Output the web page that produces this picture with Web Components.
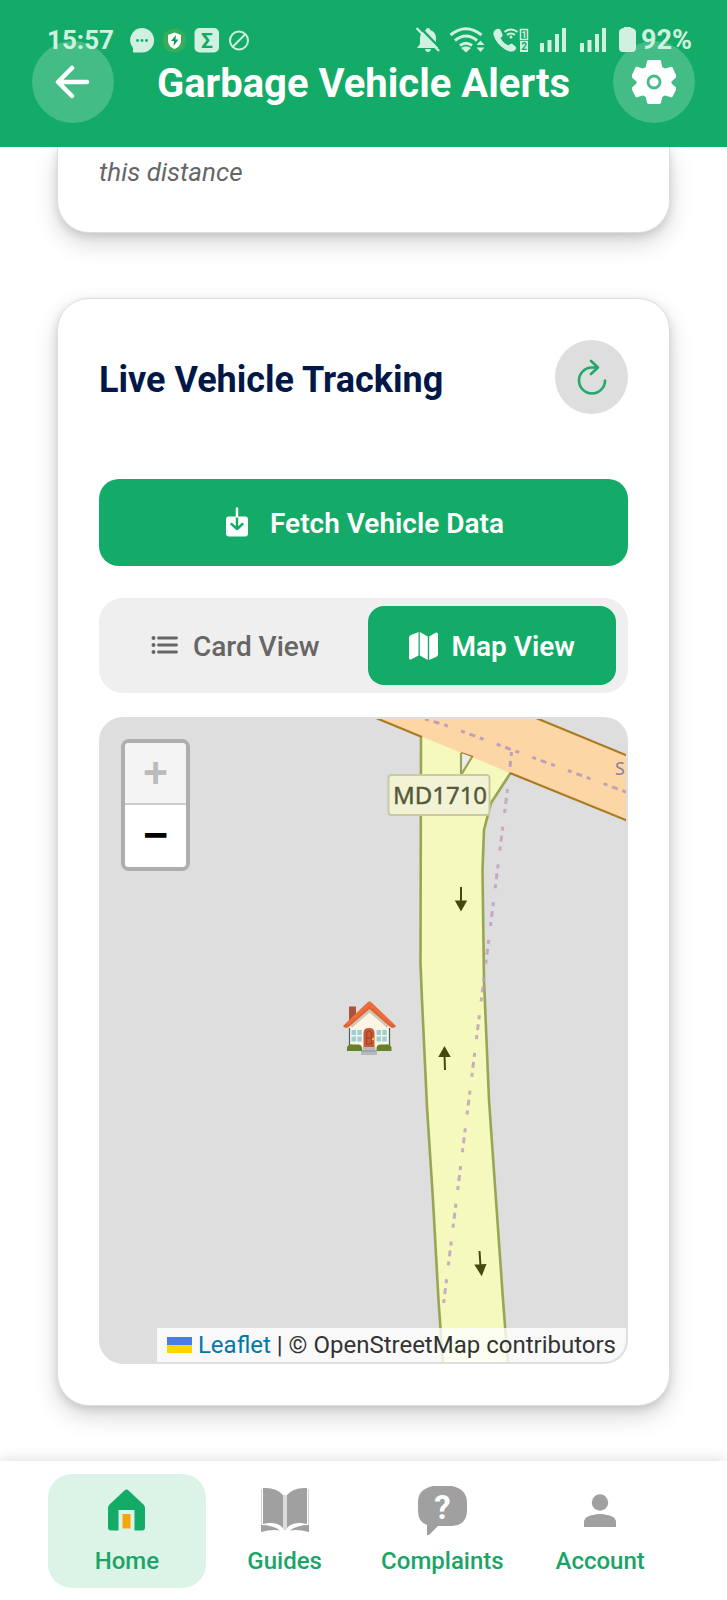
<!DOCTYPE html>
<html lang="en">
<head>
  <meta charset="UTF-8">
  <meta name="viewport" content="width=device-width, initial-scale=1.0">
  <title>Garbage Vehicle Alerts</title>
  <style>
    body {
      margin: 0;
      min-height: 100vh;
      display: flex;
      flex-direction: column;
      background: #fff;
      font-family: Roboto, "Liberation Sans", sans-serif;
      --green: #13ab67;
      --line: #dedede;
    }
    main {
      flex: 1;
      padding: 0 57px 55px;
    }
    .hint {
      margin: 0;
      font-size: 26px;
      line-height: 32px;
      font-style: italic;
      color: #666;
    }
  </style>
</head>
<body>
  <app-header>Garbage Vehicle Alerts</app-header>
  <main>
    <app-card scrolled>
      <p class="hint">this distance</p>
    </app-card>
    <app-card>
      <tracking-head>Live Vehicle Tracking</tracking-head>
      <fetch-button>Fetch Vehicle Data</fetch-button>
      <view-toggle></view-toggle>
      <vehicle-map></vehicle-map>
    </app-card>
  </main>
  <bottom-nav>
    <nav-item active>
      <svg slot="icon" width="49" height="49" viewBox="0 0 49 49">
        <path fill="#13ab67" d="M24.500 3.500q-1 0-2 1L7.500 18.500Q6 20 6 22v19.500q0 3 3 3h7.500V24h16v20.500H40q3 0 3-3V22q0-2-1.500-3.500L26.500 4.500q-1-1-2-1z"/>
        <path fill="#f7a60a" d="M20.500 28h8v14.500h-8z"/>
      </svg>
      Home
    </nav-item>
    <nav-item>
      <svg slot="icon" width="49" height="49" viewBox="0 0 49 49">
        <path fill="#a0a0a0" d="M3 2q13-1 20 7v33Q17 35 3 38zM47 2q-13-1-20 7v33q6-7 20-4z"/>
        <path fill="#dcdcdc" d="M23 9h4v35h-4z"/>
        <path fill="#a0a0a0" d="M1 39q12 0 19 5.500Q12 43 1 46zM49 39q-12 0-19 5.500 8-1.500 19 1.500z"/>
        <path fill="none" stroke="#d0d0d0" stroke-width="1" d="M1.500 3v36M48.500 3v36"/>
      </svg>
      Guides
    </nav-item>
    <nav-item>
      <svg slot="icon" width="49" height="49" viewBox="0 0 49 49">
        <path fill="#a0a0a0" d="M15 0h19q15 3 15 17v7q0 15-15 16H20l-9 9H9V39Q0 36 0 25v-9Q0 3 15 0z"/>
        <text x="24.500" y="33" text-anchor="middle" font-family="Roboto, sans-serif" font-size="33" font-weight="700" fill="#fff">?</text>
      </svg>
      Complaints
    </nav-item>
    <nav-item>
      <svg slot="icon" width="49" height="49" viewBox="0 0 49 49">
        <circle cx="24" cy="16.500" r="8.200" fill="#a0a0a0"/>
        <path fill="#a0a0a0" d="M8 41v-5q0-7 16-8 16 1 16 8v5z"/>
      </svg>
      Account
    </nav-item>
  </bottom-nav>

  <script>
    function define (name, html) {
      const template = document.createElement('template')
      template.innerHTML = html
      customElements.define(name, class extends HTMLElement {
        constructor () {
          super()
          this.attachShadow({ mode: 'open' }).appendChild(template.content.cloneNode(true))
        }
      })
    }

    define('status-bar', `
      <style>
        :host {
          display: flex;
          justify-content: space-between;
          align-items: center;
          padding: 0 35px 0 47px;
          color: #d0f0e0;
          font-size: 26px;
          line-height: 28px;
          font-weight: 700;
        }
        div { display: flex; align-items: center; }
        .left { gap: 15px; }
        .right { gap: 4px; font-size: 27px; }
        svg { display: block; }
      </style>
      <div class="left">
        <span>15:57</span>
        <svg width="121" height="28" viewBox="129 26 121 28">
          <path fill="#d0f0e0" d="M142 28a12 12.200 0 1 1 0 24.500h-8q-1.500 0-1-2v-2.500A12 12.200 0 0 1 142 28z"/>
          <g fill="#13ab67"><circle cx="137.500" cy="40.500" r="1.400"/><circle cx="142" cy="40.500" r="1.400"/><circle cx="146.500" cy="40.500" r="1.400"/></g>
          <circle cx="174.500" cy="40.500" r="12" fill="#36ad58"/>
          <path fill="#fff" d="M174.500 32.500l6.500 2.500v6q0 5-6.500 8-6.500-3-6.500-8v-6z"/>
          <path fill="#0d9a58" d="M176 35l-5 6h3l-.5 5 5-6.500h-3z"/>
          <rect x="194.500" y="28" width="24.500" height="24.500" rx="5" fill="#d0f0e0"/>
          <text x="207" y="48" text-anchor="middle" font-family="Roboto, sans-serif" font-size="21" font-weight="700" fill="#13ab67">Σ</text>
          <g fill="none" stroke="#d0f0e0" stroke-width="2"><circle cx="239" cy="40.500" r="9"/><path d="M232.500 47l13-13"/></g>
        </svg>
      </div>
      <div class="right">
        <svg width="222" height="28" viewBox="414 26 222 28" fill="#d0f0e0">
          <path d="M427 28q2 0 2.200 2 5.800 2 5.800 8v6l3 4h-22l3-4v-6q0-6 5.800-8 .2-2 2.200-2zM424 49h6q-.5 3-3 3t-3-3z"/>
          <path d="M417.500 26l22.500 23" stroke="#13ab67" stroke-width="2.500"/>
          <path d="M415.500 28l22.500 23" stroke="#d0f0e0" stroke-width="2.400"/>
          <g fill="none" stroke="#d0f0e0" stroke-width="3"><path d="M449.500 35q15.500-12.500 31 0M454 40.500q11-9 22 0M459 45.500q6-4.500 12 0"/></g>
          <path d="M460 48q5-3.500 10 0l-5 4.500z"/>
          <path d="M475.500 45l4-4.500 4 4.500zM475.500 47.500l4 4.500 4-4.500z"/>
          <path d="M494 30q4-2.500 5.500 0l2 4.500q.5 2-2 3.500 3 5.500 8 7.500 2-2.500 4-1.500l3 2.500q2 2-1.500 4.500-4 1.500-9-1.500-9-6-11.500-14.500-.5-3.500 1.500-5z"/>
          <g fill="none" stroke="#d0f0e0" stroke-width="2"><path d="M503.500 32q6.500-5 13 0M506 35q4-3 8 0"/></g><circle cx="510" cy="37" r="1.500"/>
          <rect x="519.500" y="29.500" width="7" height="10" fill="none" stroke="#d0f0e0" stroke-width="1.500"/>
          <rect x="519" y="41" width="8" height="11"/>
          <text x="523" y="38" text-anchor="middle" font-family="Roboto, sans-serif" font-size="9" font-weight="700">1</text>
          <text x="523" y="50" text-anchor="middle" font-family="Roboto, sans-serif" font-size="10" font-weight="700" fill="#13ab67">2</text>
          <path d="M539 43h4v9h-4zM546.500 40h4v12h-4zM554 34h4v18h-4zM561 28h4v24h-4z"/>
          <path d="M579 43h4v9h-4zM586.500 40h4v12h-4zM594 34h4v18h-4zM601 28h4v24h-4z"/>
          <path d="M623 27h7v1h1q4 1 4 4v16q0 4-4 4h-9q-4 0-4-4V32q0-3 4-4h1z"/>
        </svg>
        <span>92%</span>
      </div>
    `)

    define('app-header', `
      <style>
        :host {
          display: block;
          position: relative;
          z-index: 1;
          background: var(--green);
          color: #fff;
        }
        header {
          display: flex;
          align-items: center;
          justify-content: space-between;
          padding: 41px 32px 24px;
        }
        h1 {
          margin: 0;
          padding-top: 3px;
          font-size: 40px;
          line-height: 48px;
          font-weight: 700;
        }
        button {
          width: 82px;
          height: 82px;
          padding: 0;
          border: 0;
          border-radius: 50%;
          background: #43bc85;
          color: #fff;
          display: grid;
          place-items: center;
        }
        /* the system bar is drawn over the round buttons */
        status-bar {
          position: absolute;
          top: 26px;
          left: 0;
          right: 0;
        }
      </style>
      <header>
        <button aria-label="Back">
          <svg width="36" height="36" viewBox="0 0 36 36" fill="none" stroke="#fff" stroke-width="4.500" stroke-linecap="round" stroke-linejoin="round"><path d="M17 4L3 18 17 32M4 18h28"/></svg>
        </button>
        <h1><slot></slot></h1>
        <button aria-label="Settings">
          <svg width="44" height="44" viewBox="0 0 44 44">
            <path fill="#fff" stroke="#fff" stroke-width="3" stroke-linejoin="round" d="M16.500 1.500h11l1.500 6.500 4 2.300 6.300-2L43 16.500l-5 4.500v3l5 4.500-3.700 7.200-6.300-2-4 2.300-1.500 6.500h-11L15 36l-4-2.300-6.300 2L1 28.500 6 24v-3l-5-4.500 3.700-8.200 6.300 2L15 8z"/>
            <circle cx="22" cy="22" r="6" fill="#fff" stroke="#43bc85" stroke-width="2.800"/>
          </svg>
        </button>
      </header>
      <status-bar></status-bar>
    `)

    define('app-card', `
      <style>
        :host {
          display: flex;
          flex-direction: column;
          margin-bottom: 65px;
          padding: 41px;
          border: 1px solid var(--line);
          border-radius: 32px;
          background: #fff;
          box-shadow: 0 10px 24px rgba(0, 0, 0, .16), 0 3px 8px rgba(0, 0, 0, .12);
        }
        :host(:last-child) { margin-bottom: 0; }
        /* top of the card is scrolled away under the header */
        :host([scrolled]) {
          padding-top: 9px;
          padding-bottom: 44px;
          border-top: 0;
          border-radius: 0 0 32px 32px;
        }
      </style>
      <slot></slot>
    `)

    define('tracking-head', `
      <style>
        :host {
          display: flex;
          align-items: center;
          justify-content: space-between;
          margin-bottom: 65px;
        }
        h2 {
          margin: 0;
          padding-top: 5px;
          color: #001848;
          font-size: 36px;
          line-height: 44px;
          font-weight: 700;
        }
        button {
          width: 73px;
          height: 74px;
          padding: 0;
          border: 0;
          border-radius: 50%;
          background: #dedede;
          display: grid;
          place-items: center;
        }
      </style>
      <h2><slot></slot></h2>
      <button aria-label="Refresh">
        <svg width="30" height="36" viewBox="0 0 30 36" fill="none" stroke="#22a86b" stroke-width="2.600" stroke-linecap="round" stroke-linejoin="round">
          <path d="M28 21.500A13 13 0 1 1 15 8.500h6M14 2l7 6.500-7 6.500"/>
        </svg>
      </button>
    `)

    define('fetch-button', `
      <style>
        :host { display: block; margin-bottom: 32px; }
        button {
          width: 100%;
          display: flex;
          align-items: center;
          justify-content: center;
          gap: 19px;
          padding: 28px 16px 26px;
          border: 0;
          border-radius: 20px;
          background: var(--green);
          color: #fff;
          font: 600 28px/33px Roboto, sans-serif;
        }
      </style>
      <button>
        <svg width="28" height="33" viewBox="0 0 28 33">
          <rect x="3" y="9.500" width="22" height="20" rx="3" fill="#fff"/>
          <path d="M14 10v12M8.500 17l5.500 5 5.500-5" fill="none" stroke="#13ab67" stroke-width="2.400" stroke-linecap="round" stroke-linejoin="round"/>
          <path d="M14 1.500v8" stroke="#fff" stroke-width="2.400" stroke-linecap="round"/>
        </svg>
        <span><slot></slot></span>
      </button>
    `)

    define('view-toggle', `
      <style>
        :host {
          display: flex;
          gap: 8px;
          margin-bottom: 24px;
          padding: 8px 12px;
          border-radius: 24px;
          background: #efefef;
        }
        button {
          flex: 1;
          display: flex;
          align-items: center;
          justify-content: center;
          gap: 14px;
          padding: 24px 0 22px;
          border: 0;
          border-radius: 16px;
          background: none;
          color: #666;
          font: 500 28px/33px Roboto, sans-serif;
        }
        .active {
          background: var(--green);
          color: #fff;
          font-weight: 600;
        }
      </style>
      <button aria-pressed="false">
        <svg width="28" height="28" viewBox="0 0 28 28" stroke="#666" stroke-width="2.800" stroke-linecap="round">
          <path d="M7.500 5h18M7.500 12h18M7.500 19h18"/>
          <g fill="#666" stroke="none"><circle cx="2.500" cy="5" r="2"/><circle cx="2.500" cy="12" r="2"/><circle cx="2.500" cy="19" r="2"/></g>
        </svg>
        Card View
      </button>
      <button class="active" aria-pressed="true">
        <svg width="29" height="30" viewBox="0 0 29 30" fill="#fff">
          <path d="M9.500 0v23.500L2 27.500q-2 .5-2-1.500V5.500Q0 4 1.500 3.300zM10.800 0l8 4.500V28l-8-4.500zM20.200 4.500L27 .5q2-.5 2 1.500v20.500q0 1.500-1.500 2.200L20.200 28z"/>
        </svg>
        Map View
      </button>
    `)

    define('vehicle-map', `
      <style>
        :host {
          display: block;
          position: relative;
          height: 643px;
          border: 2px solid var(--line);
          border-radius: 24px;
          background: #dedede;
          overflow: hidden;
        }
        .canvas {
          display: block;
          width: 100%;
          height: 100%;
        }
        .zoom {
          position: absolute;
          top: 20px;
          left: 20px;
          width: 61px;
          border: 4px solid #aeaeae;
          border-radius: 8px;
          background: #fff;
          overflow: hidden;
        }
        .zoom button {
          display: block;
          width: 100%;
          height: 62px;
          padding: 0 0 4px;
          border: 0;
          background: #fff;
          color: #000;
          font: 700 40px/58px "DejaVu Sans Mono", monospace;
        }
        .zoom button:disabled {
          background: #f4f4f4;
          color: #bbb;
          border-bottom: 2px solid #ccc;
        }
        .attribution {
          position: absolute;
          right: 0;
          bottom: 0;
          padding: 0 10px;
          background: rgba(255, 255, 255, .8);
          color: #333;
          font-size: 24px;
          line-height: 34px;
          white-space: nowrap;
        }
        a { color: #0078a8; text-decoration: none; }
      </style>
      <svg class="canvas" viewBox="101 719 525 643" preserveAspectRatio="xMinYMin slice">
        <path fill="#f5f9bd" d="M421 730L420.500 963 422 1000 427 1107 433 1200 438.500 1300 443 1364H508L503 1300 496 1200 489 1100 484 980 482.500 870 484 830 491 803 511 774z"/>
        <g fill="none" stroke="#98a653" stroke-width="2.600">
          <path d="M421 737L420.500 963 422 1000 427 1107 433 1200 438.500 1300 443 1364"/>
          <path d="M510.500 773L491 803 484 830 482.500 870 484 980 489 1100 496 1200 503 1300 508 1364"/>
        </g>
        <path fill="#fcd6a4" d="M376 718L626 820V755L537 718z"/>
        <path fill="none" stroke="#aa7a20" stroke-width="2.200" d="M376 718l46 19M461 753l12 4M510 773l118 48M536 718l92 38"/>
        <path fill="#ececec" stroke="#98a653" stroke-width="2.200" d="M461 753v22l11-18"/>
        <g fill="none" stroke="#bfa0bb" stroke-width="3" stroke-dasharray="4 5 6 5 4 14">
          <path d="M425 719L445 725 626 792"/>
          <path d="M511.500 752l-2 20" stroke-dasharray="4 5 6 30"/>
          <path d="M507.500 789L443 1308" opacity=".85"/>
        </g>
        <g fill="#434a0c" stroke="#434a0c" stroke-width="2">
          <path d="M461 887v16M456.500 901.500h9l-4.500 8z"/>
          <path d="M445 1070l-.5-15M440 1056h9l-4.500-8z"/>
          <path d="M479.500 1251l1 15M476 1265.500l9-.5-3.500 9z"/>
        </g>
        <rect x="388.500" y="775" width="101" height="40" rx="3" fill="#f2f3d5" stroke="#c9caa0" stroke-width="2"/>
        <text x="440" y="804" text-anchor="middle" font-family="Noto Sans, sans-serif" font-size="24" fill="#55583a" stroke="#55583a" stroke-width=".4">MD1710</text>
        <text x="615" y="775" font-family="Noto Sans, sans-serif" font-size="18" fill="#8b7da6">S</text>
        <!-- home marker -->
        <g>
          <path fill="#a9533a" d="M349 1006.500h7v14h-7z"/>
          <path fill="#fbf5e6" d="M369.500 1008L349.500 1027v23h40v-23z"/>
          <path fill="none" stroke="#4f5b5c" stroke-width="1.200" d="M349.500 1028v18M389.500 1028v18"/>
          <path fill="none" stroke="#cfc6b5" stroke-width="3" d="M351 1026.500l18.500-16 18.500 16"/>
          <path fill="#e2602f" d="M369.500 1001.500q1 0 2 1L396 1026q-1 2.500-5 1.500L369.500 1009 348 1027.500q-4 1-5-1.500l24.500-23.500q1-1 2-1z"/>
          <path fill="#f9804f" d="M369.500 1001.500q1 0 2 1L394 1024l-3 1-21.500-18.500L348 1025l-3-1 22.500-21.500q1-1 2-1z" opacity=".4"/>
          <path fill="#9bd0d6" d="M351.500 1030h4.500v5h-4.500zM357.300 1030h4.500v5h-4.500zM351.500 1036.500h4.500v5h-4.500zM357.300 1036.500h4.500v5h-4.500zM376.500 1030h4.500v5h-4.500zM382.300 1030h4.500v5h-4.500zM376.500 1036.500h4.500v5h-4.500zM382.300 1036.500h4.500v5h-4.500z"/>
          <path fill="#c85a38" d="M363.500 1048v-15q0-5 5.500-5t5.500 5v15z"/>
          <path fill="none" stroke="#9c412a" d="M366.500 1044v-10q0-3 2.500-3t2.500 3v10zM366.500 1038h5"/>
          <circle cx="373" cy="1039" r="1.200" fill="#ffc52e"/>
          <path fill="#66802c" d="M347 1051v-4q2-3.500 6-2.500h5q4 0 4 4v2.500zM391.500 1051v-4q-2-3.500-6-2.500h-5q-4 0-4 4v2.500z"/>
          <path fill="#b5b9bb" d="M362.500 1047h13v4h1.500v4h-16v-4h1.500z"/>
          <path stroke="#8f9496" d="M362 1051h14"/>
        </g>
      </svg>
      <div class="zoom">
        <button disabled aria-label="Zoom in">+</button>
        <button aria-label="Zoom out">−</button>
      </div>
      <div class="attribution">
        <a href="#"><svg width="25" height="16" viewBox="0 0 25 16"><path fill="#4c7be1" d="M0 0h25v8H0z"/><path fill="#ffd500" d="M0 8h25v8H0z"/></svg>
        Leaflet</a> | © OpenStreetMap contributors
      </div>
    `)

    define('bottom-nav', `
      <style>
        :host {
          display: block;
          position: relative;
          background: #fff;
          box-shadow: 0 -2px 14px rgba(0, 0, 0, .12);
        }
        nav {
          display: flex;
          padding: 13px 48px 12px;
        }
      </style>
      <nav><slot></slot></nav>
    `)

    define('nav-item', `
      <style>
        :host { flex: 1 1 0; }
        a {
          display: flex;
          flex-direction: column;
          align-items: center;
          gap: 12px;
          padding: 12px 0 13px;
          border-radius: 24px;
          color: #1aa566;
          font-size: 24px;
          line-height: 28px;
          font-weight: 500;
          text-decoration: none;
        }
        :host([active]) a { background: #dcf3e8; }
      </style>
      <a href="#"><slot name="icon"></slot><span><slot></slot></span></a>
    `)
  </script>
</body>
</html>
